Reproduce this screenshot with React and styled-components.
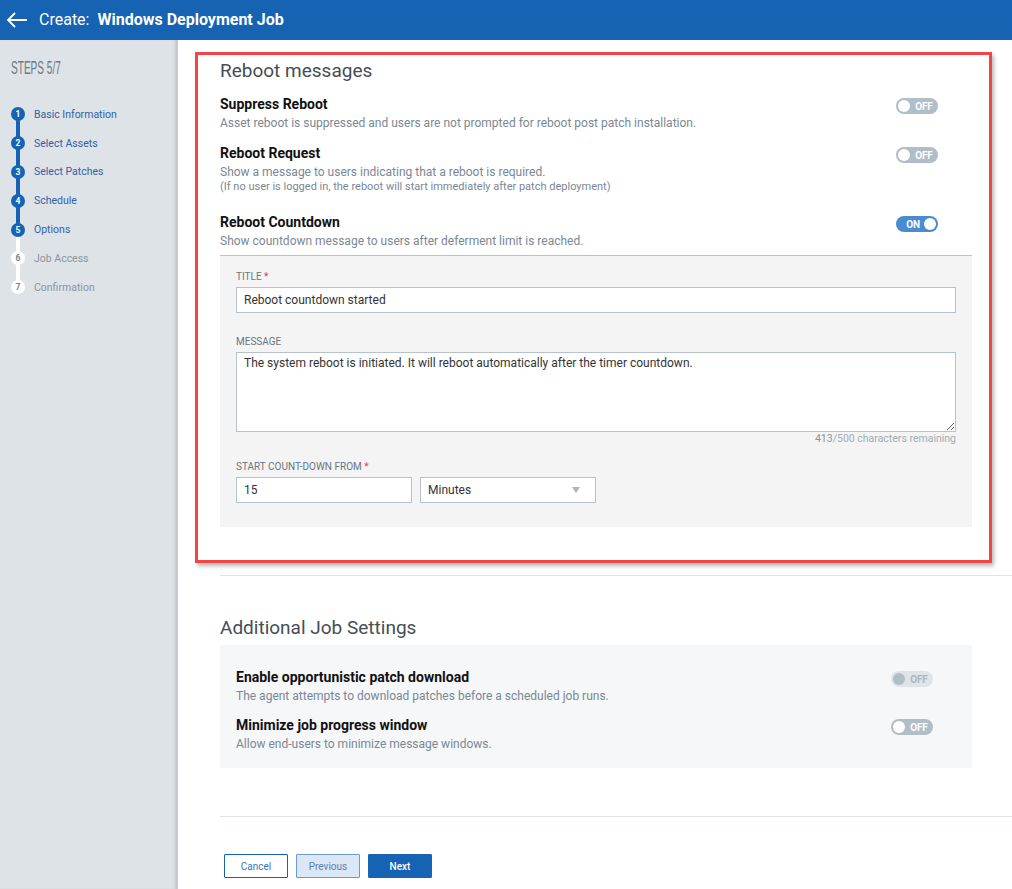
import styled, { createGlobalStyle } from "styled-components";

const GlobalStyle = createGlobalStyle`
  html, body {
    margin: 0;
    padding: 0;
    height: 100%;
    overflow: hidden;
  }
  body {
    font-family: Roboto, "Noto Sans", Arial, sans-serif;
    color: #333;
  }
  * {
    box-sizing: border-box;
  }
`;

const steps = [
  { n: 1, label: "Basic Information", done: true },
  { n: 2, label: "Select Assets", done: true },
  { n: 3, label: "Select Patches", done: true },
  { n: 4, label: "Schedule", done: true },
  { n: 5, label: "Options", done: true },
  { n: 6, label: "Job Access", done: false },
  { n: 7, label: "Confirmation", done: false },
];

const Page = styled.div`
  height: 100vh;
  display: flex;
  flex-direction: column;
`;

const TopBar = styled.header`
  height: 40px;
  flex-shrink: 0;
  background: #1662b3;
  color: #fff;
  display: flex;
  align-items: center;
  padding-left: 6px;
  gap: 11px;
  font-size: 16px;
`;

const BackArrow = styled.svg`
  width: 22px;
  height: 16px;
  display: block;
`;

const TitleText = styled.div`
  display: flex;
  gap: 8px;
  margin-top: -1px;
`;

const Strong = styled.span`
  font-weight: 700;
`;

const Body = styled.div`
  flex: 1;
  display: flex;
  min-height: 0;
`;

const Sidebar = styled.aside`
  width: 178px;
  flex-shrink: 0;
  background: #dde3e7;
  box-shadow: inset -4px 0 3px -1px rgba(0, 0, 0, 0.12);
  padding: 17px 0 0 11px;
`;

const StepsTitle = styled.div`
  font-family: "Liberation Sans", Arial, sans-serif;
  font-size: 18px;
  line-height: 22px;
  color: #6d7983;
  transform: scaleX(0.56);
  transform-origin: left;
  white-space: nowrap;
  margin-bottom: 21px;
`;

const StepList = styled.ol`
  list-style: none;
  margin: 0;
  padding: 0;
`;

const Step = styled.li`
  position: relative;
  height: 28.8px;
  display: flex;
  align-items: center;
  gap: 9px;
  font-size: 10.5px;
  color: ${(p) => (p.done ? "#3560a8" : "#8b959e")};

  &:not(:first-child)::before {
    content: "";
    position: absolute;
    left: 5px;
    top: -15px;
    width: 4px;
    height: 30px;
    background: ${(p) => (p.done ? "#1662b3" : "#fff")};
  }
`;

const StepDot = styled.span`
  position: relative;
  z-index: 1;
  width: 14px;
  height: 14px;
  border-radius: 50%;
  display: flex;
  align-items: center;
  justify-content: center;
  font-size: 8.5px;
  font-weight: 700;
  background: ${(p) => (p.done ? "#1662b3" : "#fff")};
  color: ${(p) => (p.done ? "#fff" : "#7a858f")};
`;

const Main = styled.main`
  flex: 1;
  padding-top: 12px;
  overflow: hidden;
`;

const Highlight = styled.section`
  margin-left: 17px;
  width: 797px;
  border: 3px solid #f24646;
  box-shadow: 2px 3px 4px rgba(0, 0, 0, 0.28);
  padding: 4px 17px 33px 22px;
`;

const SectionHeading = styled.h2`
  margin: 0;
  font-size: 19px;
  line-height: 24px;
  font-weight: 400;
  color: #454d56;
`;

const OptionRow = styled.div`
  display: flex;
  justify-content: space-between;
  align-items: flex-start;
  margin-top: ${(p) => p.top}px;
  padding-right: ${(p) => p.right}px;
`;

const OptionTitle = styled.div`
  font-size: 14px;
  line-height: 18px;
  font-weight: 700;
  color: #111;
`;

const OptionDesc = styled.div`
  margin-top: 2px;
  font-size: 12px;
  line-height: 16px;
  color: #7b8794;
`;

const OptionNote = styled.div`
  font-size: 11px;
  line-height: 14px;
  color: #7b8794;
`;

const ToggleTrack = styled.span`
  margin-top: ${(p) => p.top}px;
  width: 42px;
  height: 16px;
  border-radius: 8px;
  display: flex;
  align-items: center;
  flex-direction: ${(p) => (p.on ? "row-reverse" : "row")};
  justify-content: space-between;
  padding: 0 2px;
  font-size: 10px;
  font-weight: 700;
  background: ${(p) =>
    p.disabled ? "#dfe4e8" : p.on ? "#4a8bd1" : "#b1bdc7"};
  color: ${(p) => (p.disabled ? "#aab6c0" : "#fff")};
`;

const Knob = styled.span`
  width: 12px;
  height: 12px;
  border-radius: 50%;
  background: ${(p) => (p.disabled ? "#b1bdc7" : "#fff")};
`;

const ToggleLabel = styled.span`
  padding: ${(p) => (p.on ? "0 0 0 4px" : "0 0 0 2px")};
  flex: 1;
  text-align: center;
  letter-spacing: -0.2px;
`;

const FormPanel = styled.div`
  margin-top: 6px;
  background: #f4f4f4;
  border-top: 1px solid #b6c2cc;
  padding: 15px 16px 24px;
`;

const FieldLabel = styled.label`
  display: block;
  font-size: 10px;
  line-height: 12px;
  color: #6a7580;
  text-transform: uppercase;
  margin-top: ${(p) => p.top || 0}px;
  margin-bottom: 4px;
`;

const Req = styled.span`
  color: #e23c3c;
`;

const TextInput = styled.input`
  display: block;
  width: ${(p) => p.w || "100%"};
  height: 26px;
  border: 1px solid #b6c2cc;
  background: #fff;
  font-family: inherit;
  font-size: 12px;
  color: #333;
  padding: 0 7px;
  outline: none;
`;

const TextArea = styled.textarea`
  display: block;
  width: 100%;
  height: 80px;
  border: 1px solid #b6c2cc;
  background: #fff;
  font-family: inherit;
  font-size: 12px;
  color: #333;
  padding: 3px 7px;
  resize: vertical;
  outline: none;
`;

const Counter = styled.div`
  text-align: right;
  font-size: 10.5px;
  line-height: 12px;
  margin-top: 1px;
  color: #a3acb4;
`;

const CountNum = styled.span`
  color: #8a949d;
`;

const InlineFields = styled.div`
  display: flex;
  gap: 8px;
`;

const FakeSelect = styled.div`
  width: 176px;
  height: 26px;
  border: 1px solid #b6c2cc;
  background: #fff;
  display: flex;
  align-items: center;
  justify-content: space-between;
  padding: 0 15px 0 7px;
  font-size: 12px;
  color: #333;
`;

const Caret = styled.span`
  width: 0;
  height: 0;
  border-left: 4px solid transparent;
  border-right: 4px solid transparent;
  border-top: 6px solid #aab4bd;
`;

const Divider = styled.hr`
  margin: ${(p) => p.top}px 0 0 42px;
  border: none;
  border-top: 1px solid #dde3e8;
`;

const Section = styled.section`
  margin-left: 42px;
  width: 752px;
  margin-top: ${(p) => p.top}px;
`;

const SettingsPanel = styled.div`
  margin-top: 5px;
  background: #f5f7f8;
  padding: 23px 16px 16px;
`;

const Actions = styled.div`
  margin: 37px 0 0 46px;
  display: flex;
  gap: 8px;
`;

const Button = styled.button`
  width: 64px;
  height: 24px;
  font-family: inherit;
  font-size: 10px;
  border-radius: 1px;
  cursor: pointer;
  border: 1px solid ${(p) => (p.variant === "prev" ? "#6b9bd3" : "#1662b3")};
  background: ${(p) =>
    p.variant === "next"
      ? "#1662b3"
      : p.variant === "prev"
      ? "#dbe7f4"
      : "#fff"};
  color: ${(p) =>
    p.variant === "next"
      ? "#fff"
      : p.variant === "prev"
      ? "#5b80b2"
      : "#3f72b5"};
  font-weight: ${(p) => (p.variant === "next" ? 500 : 400)};
`;

function Toggle({ on, disabled, top }) {
  return (
    <ToggleTrack on={on} disabled={disabled} top={top}>
      <Knob disabled={disabled} />
      <ToggleLabel on={on}>{on ? "ON" : "OFF"}</ToggleLabel>
    </ToggleTrack>
  );
}

export default function App() {
  return (
    <Page>
      <GlobalStyle />
      <TopBar>
        <BackArrow viewBox="0 0 22 16" fill="none" stroke="#fff" strokeWidth="1.8">
          <path d="M21 8H2M9 1L2 8l7 7" />
        </BackArrow>
        <TitleText>
          <span>Create:</span>
          <Strong>Windows Deployment Job</Strong>
        </TitleText>
      </TopBar>
      <Body>
        <Sidebar>
          <StepsTitle>STEPS 5/7</StepsTitle>
          <StepList>
            {steps.map((s) => (
              <Step key={s.n} done={s.done}>
                <StepDot done={s.done}>{s.n}</StepDot>
                {s.label}
              </Step>
            ))}
          </StepList>
        </Sidebar>
        <Main>
          <Highlight>
            <SectionHeading>Reboot messages</SectionHeading>
            <OptionRow top={12} right={34}>
              <div>
                <OptionTitle>Suppress Reboot</OptionTitle>
                <OptionDesc>
                  Asset reboot is suppressed and users are not prompted for
                  reboot post patch installation.
                </OptionDesc>
              </div>
              <Toggle top={3} />
            </OptionRow>
            <OptionRow top={13} right={34}>
              <div>
                <OptionTitle>Reboot Request</OptionTitle>
                <OptionDesc>
                  Show a message to users indicating that a reboot is required.
                </OptionDesc>
                <OptionNote>
                  (If no user is logged in, the reboot will start immediately
                  after patch deployment)
                </OptionNote>
              </div>
              <Toggle top={3} />
            </OptionRow>
            <OptionRow top={19} right={34}>
              <div>
                <OptionTitle>Reboot Countdown</OptionTitle>
                <OptionDesc>
                  Show countdown message to users after deferment limit is
                  reached.
                </OptionDesc>
              </div>
              <Toggle on top={3} />
            </OptionRow>
            <FormPanel>
              <FieldLabel>
                Title <Req>*</Req>
              </FieldLabel>
              <TextInput defaultValue="Reboot countdown started" />
              <FieldLabel top={23}>Message</FieldLabel>
              <TextArea defaultValue="The system reboot is initiated. It will reboot automatically after the timer countdown." />
              <Counter>
                <CountNum>413</CountNum>/500 characters remaining
              </Counter>
              <FieldLabel top={16}>
                Start count-down from <Req>*</Req>
              </FieldLabel>
              <InlineFields>
                <TextInput w="176px" defaultValue="15" />
                <FakeSelect>
                  Minutes
                  <Caret />
                </FakeSelect>
              </InlineFields>
            </FormPanel>
          </Highlight>
          <Divider top={12} />
          <Section top={40}>
            <SectionHeading>Additional Job Settings</SectionHeading>
            <SettingsPanel>
              <OptionRow top={0} right={23}>
                <div>
                  <OptionTitle>Enable opportunistic patch download</OptionTitle>
                  <OptionDesc>
                    The agent attempts to download patches before a scheduled
                    job runs.
                  </OptionDesc>
                </div>
                <Toggle disabled top={3} />
              </OptionRow>
              <OptionRow top={12} right={23}>
                <div>
                  <OptionTitle>Minimize job progress window</OptionTitle>
                  <OptionDesc>
                    Allow end-users to minimize message windows.
                  </OptionDesc>
                </div>
                <Toggle top={3} />
              </OptionRow>
            </SettingsPanel>
          </Section>
          <Divider top={48} />
          <Actions>
            <Button>Cancel</Button>
            <Button variant="prev">Previous</Button>
            <Button variant="next">Next</Button>
          </Actions>
        </Main>
      </Body>
    </Page>
  );
}
